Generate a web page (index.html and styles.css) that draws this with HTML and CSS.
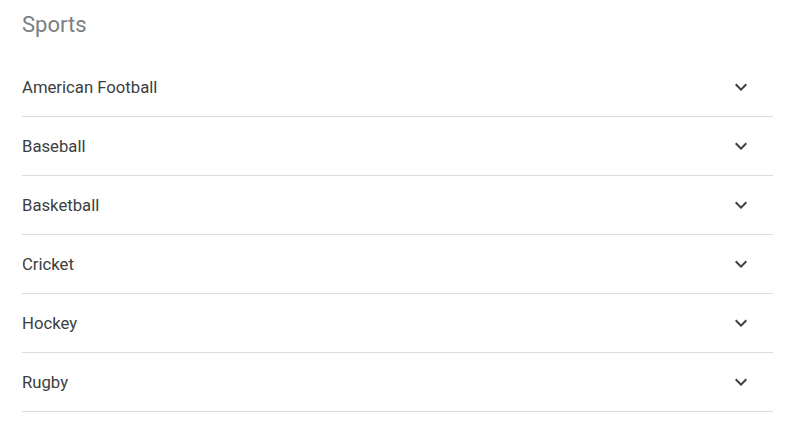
FILE: index.html
```html
<!DOCTYPE html>
<html>
<head>
<meta charset="utf-8">
<link rel="stylesheet" href="styles.css">
</head>
<body>
<div class="panel">
  <h2 class="title">Sports</h2>
  <ul class="list">
    <li class="row"><span class="label">American Football</span><svg class="chev" viewBox="0 0 24 24"><path d="M16.59 8.59L12 13.17 7.41 8.59 6 10l6 6 6-6z"/></svg></li>
    <li class="row"><span class="label">Baseball</span><svg class="chev" viewBox="0 0 24 24"><path d="M16.59 8.59L12 13.17 7.41 8.59 6 10l6 6 6-6z"/></svg></li>
    <li class="row"><span class="label">Basketball</span><svg class="chev" viewBox="0 0 24 24"><path d="M16.59 8.59L12 13.17 7.41 8.59 6 10l6 6 6-6z"/></svg></li>
    <li class="row"><span class="label">Cricket</span><svg class="chev" viewBox="0 0 24 24"><path d="M16.59 8.59L12 13.17 7.41 8.59 6 10l6 6 6-6z"/></svg></li>
    <li class="row"><span class="label">Hockey</span><svg class="chev" viewBox="0 0 24 24"><path d="M16.59 8.59L12 13.17 7.41 8.59 6 10l6 6 6-6z"/></svg></li>
    <li class="row"><span class="label">Rugby</span><svg class="chev" viewBox="0 0 24 24"><path d="M16.59 8.59L12 13.17 7.41 8.59 6 10l6 6 6-6z"/></svg></li>
  </ul>
</div>
</body>
</html>
```
FILE: styles.css
```css
html, body {
  margin: 0;
  padding: 0;
  background: #fff;
}
.panel {
  padding: 0 27px 0 22px;
  font-family: Roboto, "Liberation Sans", sans-serif;
}
.title {
  margin: 0;
  height: 58px;
  box-sizing: border-box;
  padding-top: 11px;
  font-size: 22px;
  line-height: 28px;
  font-weight: 400;
  color: #7a7e82;
}
.list {
  list-style: none;
  margin: 0;
  padding: 0;
}
.row {
  display: flex;
  align-items: center;
  justify-content: space-between;
  height: 58px;
  border-bottom: 1px solid #dadce0;
  padding-right: 20px;
}
.label {
  font-size: 16.7px;
  color: #3c4043;
}
.chev {
  width: 24px;
  height: 24px;
  fill: #3c4043;
}
```
